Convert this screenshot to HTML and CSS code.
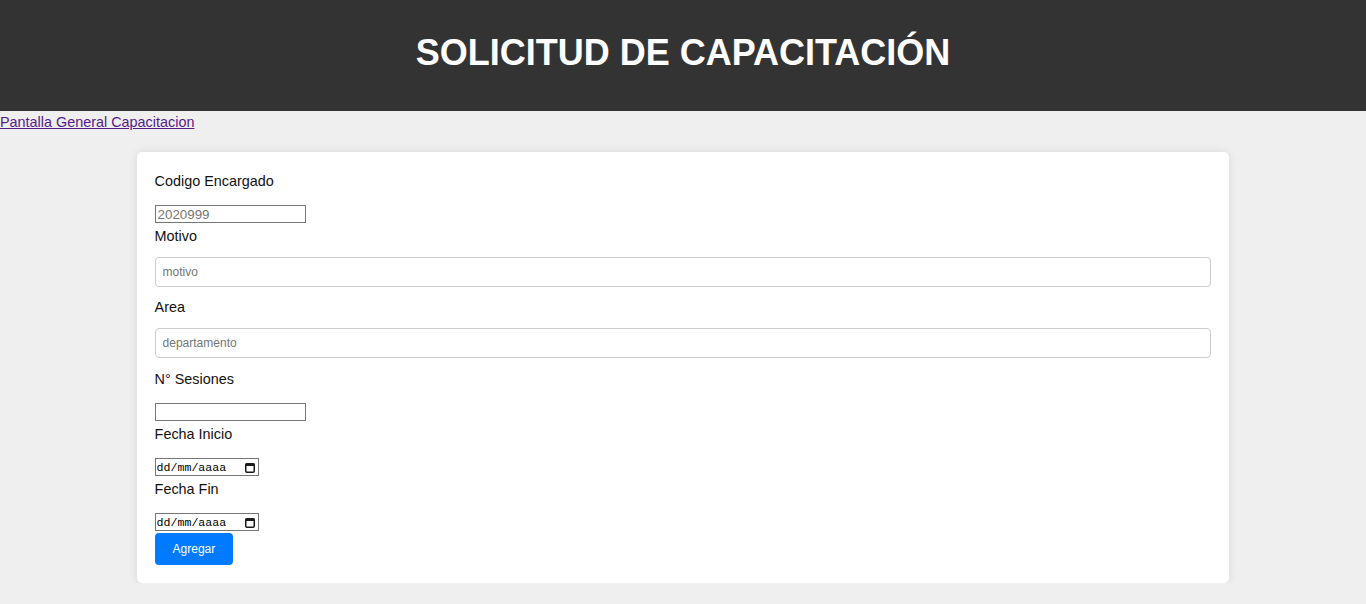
FILE: index.html
```html
<!DOCTYPE html>
<html lang="es">
<head>
<meta charset="utf-8">
<title>Solicitud de Capacitación</title>
<link rel="stylesheet" href="styles.css">
</head>
<body>
<header class="topbar">
  <h1 class="title">SOLICITUD DE CAPACITACIÓN</h1>
</header>
<div class="nav"><a class="nav-link" href="#">Pantalla General Capacitacion</a></div>
<main class="card">
  <form class="form">
    <label class="lbl first" for="codigo">Codigo Encargado</label>
    <input class="inp-sm" id="codigo" type="text" placeholder="2020999">
    <label class="lbl tight" for="motivo">Motivo</label>
    <input class="form-control first-control" id="motivo" type="text" placeholder="motivo">
    <label class="lbl tight" for="area">Area</label>
    <input class="form-control" id="area" type="text" placeholder="departamento">
    <label class="lbl" for="sesiones">N° Sesiones</label>
    <input class="inp-sm" id="sesiones" type="text">
    <label class="lbl" for="inicio">Fecha Inicio</label>
    <div class="date-field">
      <input class="date-text" id="inicio" type="text" placeholder="dd/mm/aaaa">
      <svg class="cal" width="10" height="11" viewBox="0 0 10 11"><rect x="0.75" y="1.75" width="8.5" height="8.5" rx="1.2" fill="none" stroke="#1a1a1a" stroke-width="1.5"/><rect x="0.5" y="1.5" width="9" height="2.5" fill="#1a1a1a"/></svg>
    </div>
    <label class="lbl" for="fin">Fecha Fin</label>
    <div class="date-field last">
      <input class="date-text" id="fin" type="text" placeholder="dd/mm/aaaa">
      <svg class="cal" width="10" height="11" viewBox="0 0 10 11"><rect x="0.75" y="1.75" width="8.5" height="8.5" rx="1.2" fill="none" stroke="#1a1a1a" stroke-width="1.5"/><rect x="0.5" y="1.5" width="9" height="2.5" fill="#1a1a1a"/></svg>
    </div>
    <button class="btn" type="button">Agregar</button>
  </form>
</main>
</body>
</html>
```

FILE: styles.css
```css
* {
  box-sizing: border-box;
}

html, body {
  margin: 0;
  padding: 0;
}

body {
  background: #efefef;
  font-family: "Liberation Sans", Arial, sans-serif;
  font-size: 14.4px;
  color: #111;
}

.topbar {
  background: #333333;
  padding: 33px 0 38px;
}

.title {
  margin: 0;
  color: #ffffff;
  font-size: 36px;
  line-height: 40px;
  font-weight: bold;
  text-align: center;
}

.nav {
  margin-top: 3px;
  line-height: 16px;
}

.nav-link {
  color: #551a8b;
  text-decoration: underline;
}

.card {
  display: block;
  width: 80%;
  margin: 22px auto 0;
  background: #ffffff;
  border-radius: 5px;
  box-shadow: 0 0 10px rgba(0, 0, 0, 0.1);
  padding: 18px;
}

.form {
  display: flex;
  flex-direction: column;
  align-items: flex-start;
}

.lbl {
  display: block;
  line-height: 16px;
  margin-bottom: 16px;
  color: #111;
}

.lbl.first {
  margin-top: 3px;
}

.lbl.tight {
  margin-bottom: 13px;
}

.inp-sm {
  display: block;
  width: 151px;
  height: 18px;
  border: 1px solid #767676;
  padding: 0 2px;
  margin: 0 0 5px;
  font-family: "Liberation Sans", Arial, sans-serif;
  font-size: 13.33px;
  color: #000;
  background: #fff;
  border-radius: 0;
  outline: none;
}

.inp-sm::placeholder {
  color: #757575;
}

.form-control {
  display: block;
  width: 100%;
  height: 30px;
  border: 1px solid #cccccc;
  border-radius: 4px;
  padding: 0 7px;
  margin: 0 0 13px;
  font-family: "Liberation Sans", Arial, sans-serif;
  font-size: 12px;
  color: #333;
  background: #fff;
  outline: none;
}

.form-control.first-control {
  margin-bottom: 12px;
}

.form-control::placeholder {
  color: #757575;
}

.date-field {
  display: flex;
  align-items: center;
  width: 104px;
  height: 18px;
  border: 1px solid #767676;
  background: #fff;
  padding: 0 3px 0 1px;
  margin-bottom: 5px;
}

.date-field.last {
  margin-bottom: 2px;
}

.date-text {
  flex: 1;
  min-width: 0;
  width: 80px;
  height: 16px;
  border: none;
  padding: 0;
  margin: 0;
  font-family: "Liberation Mono", "DejaVu Sans Mono", monospace;
  font-size: 11.6px;
  color: #000;
  background: transparent;
  outline: none;
}

.date-text::placeholder {
  color: #000;
  opacity: 1;
}

.cal {
  display: block;
  flex: none;
}

.btn {
  display: block;
  height: 32px;
  padding: 0 18px;
  border: none;
  border-radius: 4px;
  background: #007bff;
  color: #ffffff;
  font-family: "Liberation Sans", Arial, sans-serif;
  font-size: 12px;
  cursor: pointer;
}
```
